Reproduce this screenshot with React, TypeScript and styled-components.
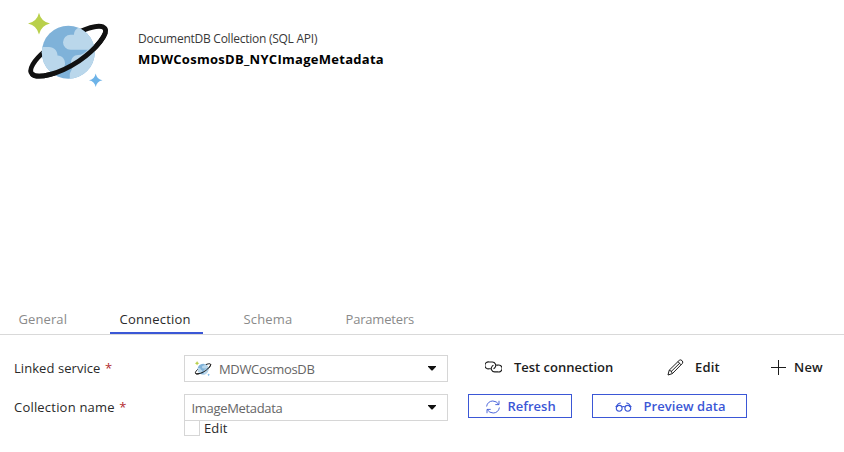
import React from "react";
import styled, { createGlobalStyle } from "styled-components";

const GlobalStyle = createGlobalStyle`
  body {
    margin: 0;
    background: #fff;
    font-family: "Open Sans", "Noto Sans", sans-serif;
    font-size: 13px;
    color: #2a2a2a;
  }
  *, *::before, *::after { box-sizing: border-box; }
`;

const Page = styled.main`
  display: flex;
  flex-direction: column;
  width: 844px;
  height: 452px;
  overflow: hidden;
`;

const Header = styled.header`
  display: flex;
  height: 305px;
  padding: 8px 0 0 24px;
`;

const Logo = styled.svg<{ $size: number }>`
  flex: none;
  display: block;
  width: ${(p) => p.$size}px;
  height: ${(p) => p.$size}px;
`;

const Heading = styled.div`
  padding: 22px 0 0 26px;
`;

const Kind = styled.div`
  font-size: 12px;
  line-height: 18px;
  letter-spacing: -0.25px;
  color: #383838;
`;

const Title = styled.h1`
  margin: 1px 0 0;
  font-size: 13px;
  font-weight: 700;
  line-height: 20px;
  letter-spacing: 0.28px;
  color: #000;
`;

const TabBar = styled.nav`
  display: flex;
  height: 30px;
  padding-left: 9px;
  border-bottom: 1px solid #d9d9d9;
`;

const Tab = styled.button<{ $width: number; $gap: number; $active?: boolean; $spacing: number }>`
  width: ${(p) => p.$width}px;
  height: 29px;
  margin: 0 ${(p) => p.$gap}px 0 0;
  padding: 0 0 0 9.5px;
  border: 0;
  border-bottom: 2px solid ${(p) => (p.$active ? "#3b57d6" : "transparent")};
  background: none;
  font: inherit;
  line-height: 26px;
  text-align: left;
  letter-spacing: ${(p) => p.$spacing}px;
  color: ${(p) => (p.$active ? "#2a2a2a" : "#8a8a8a")};
`;

const Form = styled.section`
  display: grid;
  grid-template-columns: 170px 264px auto;
  padding: 20px 0 0 14px;
  row-gap: 12px;
  align-items: start;
`;

const Label = styled.label<{ $spacing: number }>`
  line-height: 27px;
  letter-spacing: ${(p) => p.$spacing}px;
`;

const Required = styled.span`
  margin-left: 4.5px;
  color: #b22a2e;
`;

const Field = styled.div`
  display: flex;
  flex-direction: column;
`;

const Select = styled.div<{ $inset: number }>`
  display: flex;
  align-items: center;
  height: 27px;
  padding: 1px 11px 0 ${(p) => p.$inset}px;
  border: 1px solid #d6d6d6;
  color: #666;
`;

const Value = styled.span<{ $gap: number; $spacing: number }>`
  flex: 1;
  margin-left: ${(p) => p.$gap}px;
  letter-spacing: ${(p) => p.$spacing}px;
`;

const Caret = styled.svg`
  display: block;
  width: 8px;
  height: 5px;
  margin-top: -1px;
`;

const CheckRow = styled.label`
  display: flex;
  align-items: center;
  height: 16px;
  margin-top: -1px;
  gap: 4px;
  letter-spacing: 0.1px;
`;

const CheckBox = styled.span`
  width: 16px;
  height: 16px;
  border: 1px solid #d6d6d6;
`;

const Actions = styled.div<{ $start: number; $gap?: number }>`
  display: flex;
  gap: ${(p) => p.$gap ?? 0}px;
  padding-left: ${(p) => p.$start}px;
`;

const Action = styled.button<{ $width: number; $gap: number; $spacing: number; $outlined?: boolean; $inset?: number }>`
  display: flex;
  align-items: center;
  flex: none;
  gap: ${(p) => p.$gap}px;
  width: ${(p) => p.$width}px;
  height: 24px;
  padding: 0 0 0 ${(p) => p.$inset ?? 0}px;
  border: ${(p) => (p.$outlined ? "1px solid #3b57d6" : "0")};
  background: none;
  font: inherit;
  font-weight: 600;
  letter-spacing: ${(p) => p.$spacing}px;
  white-space: nowrap;
  color: ${(p) => (p.$outlined ? "#3b57d6" : "#1c1c1c")};
`;

const Glyph = styled.svg<{ $w: number; $h: number; $drop?: number }>`
  flex: none;
  display: block;
  width: ${(p) => p.$w}px;
  height: ${(p) => p.$h}px;
  margin-top: ${(p) => p.$drop ?? 0}px;
  fill: none;
  stroke: currentColor;
`;

function CosmosLogo({ size }: { size: number }) {
  const clip = `planet-${size}`;
  return (
    <Logo $size={size} viewBox="0 0 88 88">
      <defs>
        <clipPath id={clip}>
          <circle cx="44.3" cy="44.3" r="26.5" />
        </clipPath>
      </defs>
      <path
        d="M21 43C10 52 4 62 8 66C13 71 34 67 55 53C74 40 84 25 81 20.500C78 16.500 68 18 55 24"
        fill="none"
        stroke="#111"
        strokeWidth="4.800"
      />
      <circle cx="44.3" cy="44.3" r="26.5" fill="#7fb2d9" />
      <g clipPath={`url(#${clip})`} fill="#bad7eb">
        <path d="M74 41.700H46.500a7.300 7.300 0 1 1 0-15h3.500c0-5 4-8 9-8h15Z" />
        <path d="M15 39h10c5 0 8.500 4 8.500 8.500c5 0 7.500 4 7.500 8s-3 8-7 8H15Z" />
        <path d="M46 74c0-5-1-8 1-11 2-2.500 0-5 0-8 0-5 3-8 7-8 4 0 7-2 10-5.500h10v32Z" />
      </g>
      <path
        d="M8 66C13 71 34 67 55 53C74 40 84 25 81 20.500"
        fill="none"
        stroke="#111"
        strokeWidth="4.800"
      />
      <path d="M15 4.700Q17 13.500 26 15.500Q17 17.500 15 26.500Q13 17.500 4 15.500Q13 13.500 15 4.700Z" fill="#b9d04b" />
      <path d="M71.700 65.400Q72.800 71.200 78.500 72.300Q72.800 73.400 71.700 79Q70.600 73.400 65 72.300Q70.600 71.200 71.700 65.400Z" fill="#6db3e8" />
    </Logo>
  );
}

const DownCaret = () => (
  <Caret viewBox="0 0 8 5">
    <path d="M0 0H8V.8L4.500 4.600H3.500L0 .8Z" fill="#111" />
  </Caret>
);

const LinkIcon = () => (
  <Glyph $w={17} $h={12} viewBox="0 0 17 12" strokeWidth="1.100">
    <path d="M5.800 7.800H4.200A3.500 3.500 0 1 1 4.200 1H7.200A3.400 3.400 0 0 1 9.900 6.600Q9.400 7.400 8.500 7.700" />
    <path d="M11.200 4.100H12.800A3.500 3.500 0 1 1 12.800 10.900H9.800A3.400 3.400 0 0 1 7.100 5.300Q7.600 4.500 8.500 4.200" />
  </Glyph>
);

const PencilIcon = () => (
  <Glyph $w={17} $h={17} viewBox="0 0 17 17" strokeWidth="1">
    <path d="M1 16L2.200 11.200L12.300 1.300Q13.700.3 15 1.600Q16.500 3 15.400 4.400L5.400 14.600ZM2.200 11.200Q4.800 11.600 5.400 14.600M11 2.700L14 5.800M4 12.700L12.700 4.200" />
  </Glyph>
);

const PlusIcon = () => (
  <Glyph $w={15} $h={15} $drop={1} viewBox="0 0 15 15" strokeWidth="1">
    <path d="M0 7.500H15M7.500 0V15" />
  </Glyph>
);

const RefreshIcon = () => (
  <Glyph $w={14} $h={14} $drop={2} viewBox="0 0 14 14" strokeWidth=".9">
    <path d="M.6 6.500C1 3 3.800 1 6.800 1Q10.500 1 12.800 4.400M13 .8V4.600H9.300M13.400 7.500C13 11 10.200 13 7.200 13Q3.500 13 1.200 9.600M1 13.200V9.400H4.700" />
  </Glyph>
);

const GlassesIcon = () => (
  <Glyph $w={17} $h={10} $drop={1} viewBox="0 0 17 10" strokeWidth="1.100">
    <circle cx="4.200" cy="6.300" r="2.900" />
    <circle cx="12.800" cy="6.300" r="2.900" />
    <path d="M.5 4.500H3M7 5Q8.500 4 10 5M14 4.500H16.500M1.500 4.500Q2.800 1 5.800 1M15.500 4.500Q14.200 1 11.200 1" />
  </Glyph>
);

export default function App() {
  return (
    <>
      <GlobalStyle />
      <Page>
        <Header>
          <CosmosLogo size={88} />
          <Heading>
            <Kind>DocumentDB Collection (SQL API)</Kind>
            <Title>MDWCosmosDB_NYCImageMetadata</Title>
          </Heading>
        </Header>

        <TabBar>
          <Tab $width={69} $gap={32} $spacing={0.1}>General</Tab>
          <Tab $width={93} $gap={31} $spacing={0.2} $active>Connection</Tab>
          <Tab $width={70} $gap={32} $spacing={0.15}>Schema</Tab>
          <Tab $width={90} $gap={0} $spacing={-0.18}>Parameters</Tab>
        </TabBar>

        <Form>
          <Label $spacing={0.06}>
            Linked service<Required>*</Required>
          </Label>
          <Field>
            <Select $inset={9}>
              <CosmosLogo size={18} />
              <Value $gap={7} $spacing={-0.34}>MDWCosmosDB</Value>
              <DownCaret />
            </Select>
          </Field>
          <Actions $start={37}>
            <Action $width={182} $gap={12} $spacing={-0.02}><LinkIcon />Test connection</Action>
            <Action $width={104} $gap={11} $spacing={0.2}><PencilIcon />Edit</Action>
            <Action $width={60} $gap={8} $spacing={0.2}><PlusIcon />New</Action>
          </Actions>

          <Label $spacing={0.2}>
            Collection name<Required>*</Required>
          </Label>
          <Field>
            <Select $inset={6.5}>
              <Value $gap={0} $spacing={-0.32}>ImageMetadata</Value>
              <DownCaret />
            </Select>
            <CheckRow>
              <CheckBox />Edit
            </CheckRow>
          </Field>
          <Actions $start={20} $gap={20}>
            <Action $width={104} $gap={7.5} $inset={17} $spacing={0} $outlined><RefreshIcon />Refresh</Action>
            <Action $width={155} $gap={11.500} $inset={22} $spacing={0.05} $outlined><GlassesIcon />Preview data</Action>
          </Actions>
        </Form>
      </Page>
    </>
  );
}
